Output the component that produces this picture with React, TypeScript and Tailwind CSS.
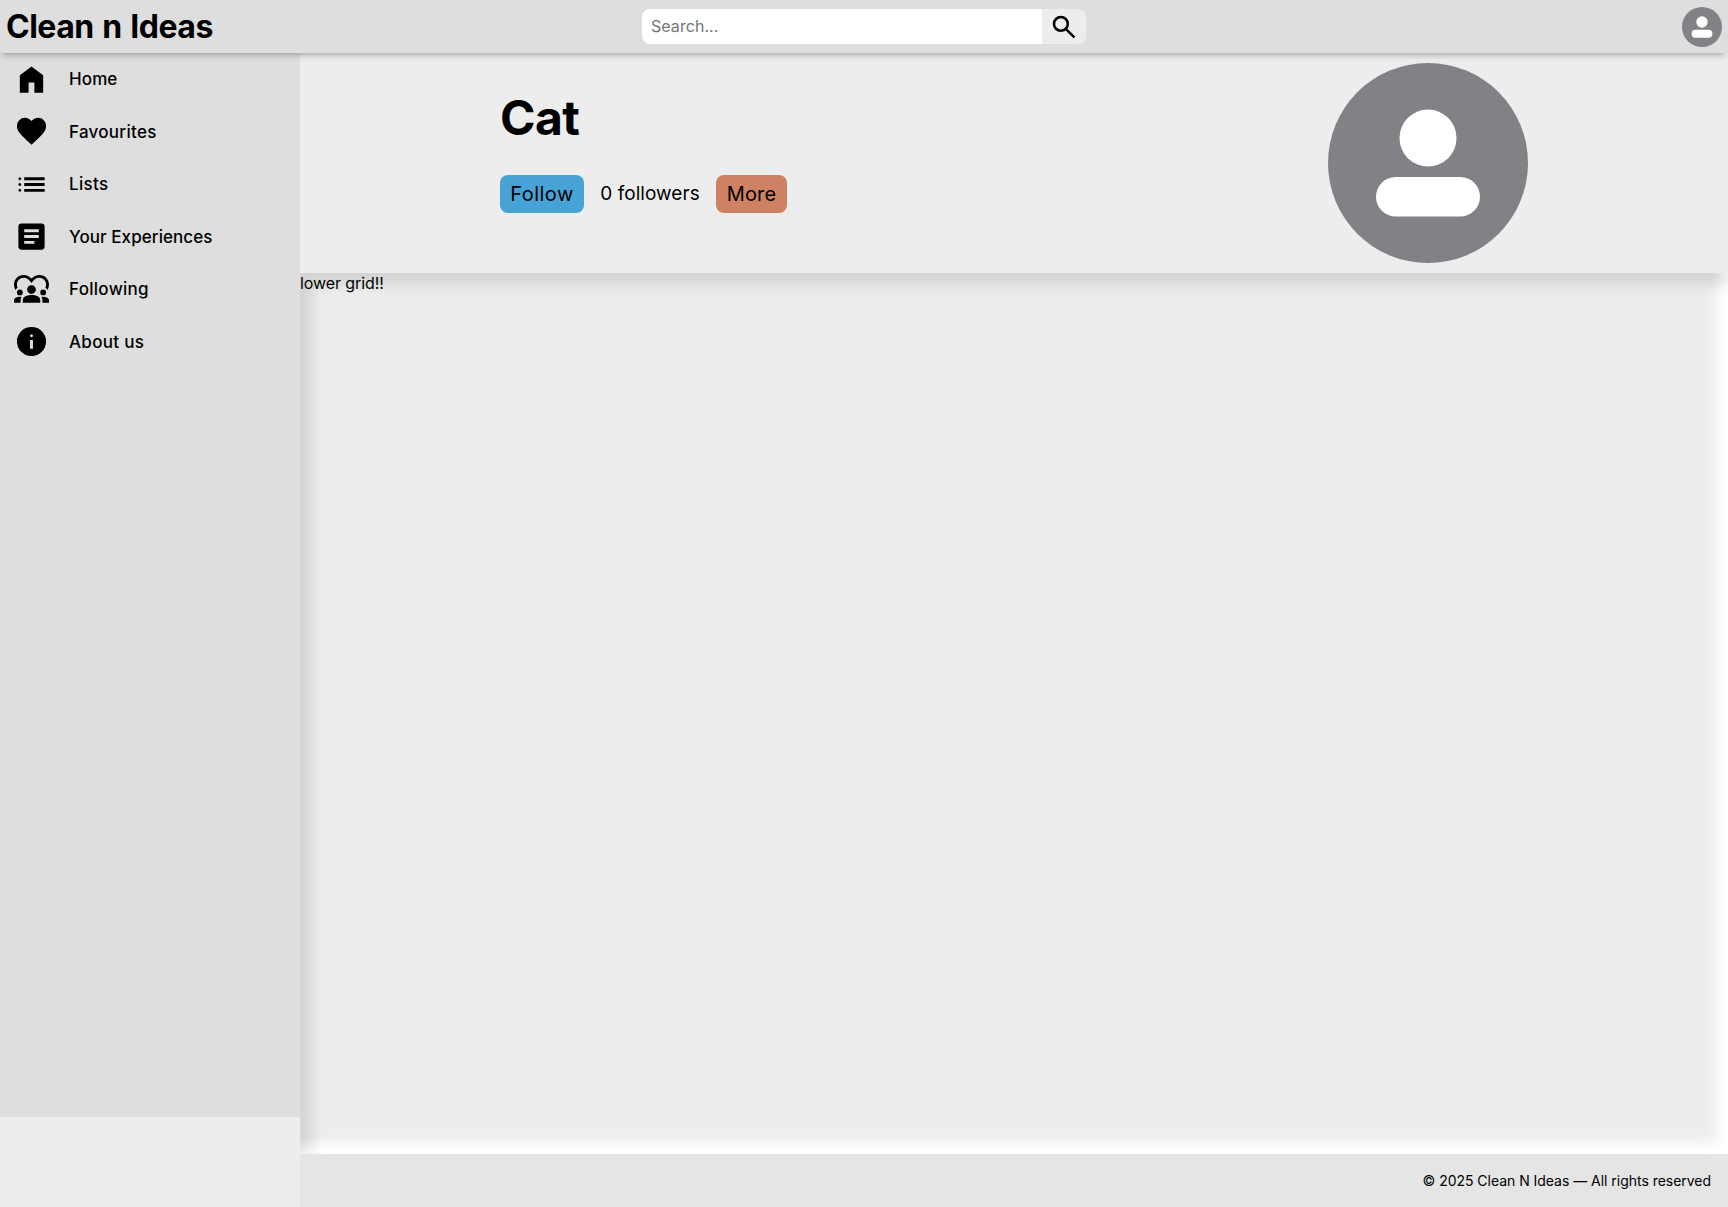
import { MdDiversity1 } from "react-icons/md";

const paths = {
  home: "M160-120v-480l320-240 320 240v480H560v-280H400v280H160Z",
  heart:
    "m480-120-58-52q-101-91-167-157T150-447.5Q111-500 95.5-544T80-634q0-94 63-157t157-63q52 0 99 22t81 62q34-40 81-62t99-22q94 0 157 63t63 157q0 46-15.5 90T810-447.5Q771-395 705-329T538-172l-58 52Z",
  list: "M280-600v-80h560v80H280Zm0 160v-80h560v80H280Zm0 160v-80h560v80H280ZM160-600q-17 0-28.5-11.5T120-640q0-17 11.5-28.5T160-680q17 0 28.5 11.5T200-640q0 17-11.5 28.5T160-600Zm0 160q-17 0-28.5-11.5T120-480q0-17 11.5-28.5T160-520q17 0 28.5 11.5T200-480q0 17-11.5 28.5T160-440Zm0 160q-17 0-28.5-11.5T120-320q0-17 11.5-28.5T160-360q17 0 28.5 11.5T200-320q0 17-11.5 28.5T160-280Z",
  article:
    "M280-280h280v-80H280v80Zm0-160h400v-80H280v80Zm0-160h400v-80H280v80Zm-80 480q-33 0-56.5-23.5T120-200v-560q0-33 23.5-56.5T200-840h560q33 0 56.5 23.5T840-760v560q0 33-23.5 56.5T760-120H200Z",
  info: "M440-280h80v-240h-80v240Zm40-320q17 0 28.5-11.5T520-640q0-17-11.5-28.5T480-680q-17 0-28.5 11.5T440-640q0 17 11.5 28.5T480-600Zm0 520q-83 0-156-31.5T197-197q-54-54-85.5-127T80-480q0-83 31.5-156T197-763q54-54 127-85.5T480-880q83 0 156 31.5T763-763q54 54 85.5 127T880-480q0 83-31.5 156T763-197q-54 54-127 85.5T480-80Z",
  search:
    "M784-120 532-372q-30 24-69 38t-83 14q-109 0-184.5-75.5T120-580q0-109 75.5-184.5T380-840q109 0 184.5 75.5T640-580q0 44-14 83t-38 69l252 252-56 56ZM380-400q75 0 127.5-52.5T560-580q0-75-52.5-127.5T380-760q-75 0-127.5 52.5T200-580q0 75 52.5 127.5T380-400Z",
};

function Icon({ d, className }: { d: string; className: string }) {
  return (
    <svg viewBox="0 -960 960 960" className={className} fill="currentColor">
      <path d={d} />
    </svg>
  );
}

function Avatar({ className }: { className: string }) {
  return (
    <svg viewBox="0 0 200 200" className={className}>
      <circle cx="100" cy="100" r="100" fill="#818286" />
      <circle cx="100" cy="75" r="28.5" fill="#fff" />
      <rect x="48" y="114" width="104" height="39.5" rx="19.75" fill="#fff" />
    </svg>
  );
}

const items = [
  { label: "Home", d: paths.home, text: "tracking-[0.1px]" },
  { label: "Favourites", d: paths.heart, text: "tracking-[0.28px]" },
  { label: "Lists", d: paths.list, text: "tracking-[0.3px]" },
  { label: "Your Experiences", d: paths.article, text: "tracking-[0.07px]" },
  { label: "Following", d: "", text: "tracking-[0.28px]" },
  { label: "About us", d: paths.info, text: "tracking-[0.3px]" },
];

export default function App() {
  return (
    <div className="flex h-[1207px] w-full flex-col bg-[#ededed] font-['Inter',sans-serif] text-black">
      <header className="relative z-10 grid h-[53px] shrink-0 grid-cols-[1fr_444px_1fr] items-center bg-[#dedede] shadow-[0_5px_6px_-3px_rgba(0,0,0,0.3)]">
        <h1 className="pl-[6px] text-[32px] leading-none font-bold tracking-[-0.5px] whitespace-nowrap [word-spacing:1.5px]">
          Clean n Ideas
        </h1>
        <form className="flex h-[35px] overflow-hidden rounded-[8px]">
          <input
            className="w-[400px] bg-white px-[9px] pb-[2px] text-[16px] tracking-[0.05px] outline-none placeholder:text-[#757575]"
            placeholder="Search..."
          />
          <button type="button" className="flex w-[44px] items-center justify-center bg-[#ededed]">
            <Icon d={paths.search} className="size-[30px]" />
          </button>
        </form>
        <div className="flex justify-end pr-[6px]">
          <Avatar className="size-10" />
        </div>
      </header>
      <div className="flex min-h-0 flex-1">
        <nav className="h-[1064px] w-[300px] shrink-0 bg-[#dedede]">
          <ul>
            {items.map((it) => (
              <li key={it.label} className="flex h-[52.5px] items-center gap-5 pl-[14px]">
                {it.d ? <Icon d={it.d} className="size-[35px]" /> : <MdDiversity1 className="size-[35px]" />}
                <span className={`pt-px text-[17px] font-medium ${it.text}`}>{it.label}</span>
              </li>
            ))}
          </ul>
        </nav>
        <main className="flex min-w-0 flex-1 flex-col">
          <section className="flex h-[220px] shrink-0 justify-between pt-[10px] pr-[200px] pl-[200px]">
            <div className="pt-[27px]">
              <h2 className="text-[48px] leading-[56px] font-bold tracking-[-0.6px]">Cat</h2>
              <div className="mt-[29px] flex items-center">
                <button className="h-[38px] w-[84px] rounded-[8px] bg-[#47a2d5] text-[20px] tracking-[0.5px]">Follow</button>
                <span className="w-[132px] text-center text-[19px] tracking-[0.05px]">0 followers</span>
                <button className="h-[38px] w-[71px] rounded-[8px] bg-[#cf8163] text-[20px] tracking-[0.2px]">More</button>
              </div>
            </div>
            <Avatar className="size-[200px]" />
          </section>
          <section className="relative flex-1 bg-[#ededed] text-[16px] leading-5 tracking-[-0.08px] shadow-[inset_-11px_-11px_13px_#ffffff]">
            {/* Dark edge on the top and left, fading where it meets the light edge */}
            <div className="pointer-events-none absolute inset-0 shadow-[inset_12px_12px_13px_#d4d4d4] [mask-composite:intersect] [mask-image:linear-gradient(to_bottom,#000_calc(100%-18px),rgba(0,0,0,0.4)_calc(100%-2px)),linear-gradient(to_right,#000_calc(100%-18px),rgba(0,0,0,0.4)_calc(100%-2px))]" />
            <span className="relative">lower grid!!</span>
          </section>
          <footer className="flex h-[53px] shrink-0 items-center justify-end bg-[#e5e5e5] pr-[17px] pb-px text-[14px] tracking-[-0.03px]">
            © 2025 Clean N Ideas — All rights reserved
          </footer>
        </main>
      </div>
    </div>
  );
}
